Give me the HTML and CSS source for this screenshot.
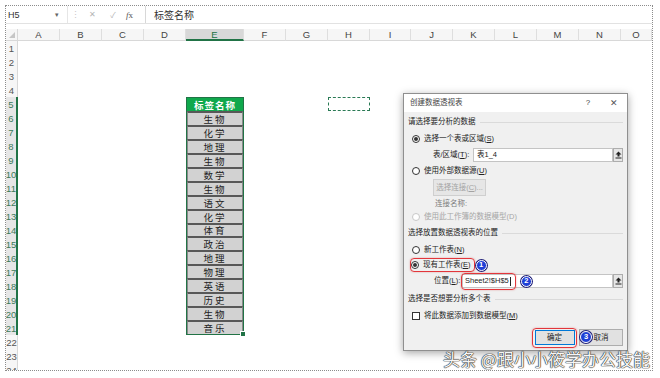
FILE: index.html
```html
<!DOCTYPE html>
<html>
<head>
  <meta charset="utf-8">
  <title>创建数据透视表</title>
  <link rel="stylesheet" href="styles.css">
</head>
<body>
  <div class="frame">
    <div class="fbar">
      <div class="namebox"><span>H5</span><span class="dd">▾</span></div>
      <div class="grip">⋮</div>
      <div class="fx-icons">
        <span class="ic">✕</span>
        <span class="ic">✓</span>
        <span class="fx"><i>f</i>x</span>
      </div>
      <div class="finput">标签名称</div>
    </div>

    <div class="sheet">
      <div class="corner"></div>
      <div class="ch">A</div>
      <div class="ch">B</div>
      <div class="ch">C</div>
      <div class="ch">D</div>
      <div class="ch sel">E</div>
      <div class="ch">F</div>
      <div class="ch">G</div>
      <div class="ch">H</div>
      <div class="ch">I</div>
      <div class="ch">J</div>
      <div class="ch">K</div>
      <div class="ch">L</div>
      <div class="ch">M</div>
      <div class="ch">N</div>
      <div class="ch">O</div>

      <div class="rowheads">
        <div class="rh">1</div>
        <div class="rh">2</div>
        <div class="rh">3</div>
        <div class="rh">4</div>
        <div class="rh sel">5</div>
        <div class="rh sel">6</div>
        <div class="rh sel">7</div>
        <div class="rh sel">8</div>
        <div class="rh sel">9</div>
        <div class="rh sel">10</div>
        <div class="rh sel">11</div>
        <div class="rh sel">12</div>
        <div class="rh sel">13</div>
        <div class="rh sel">14</div>
        <div class="rh sel">15</div>
        <div class="rh sel">16</div>
        <div class="rh sel">17</div>
        <div class="rh sel">18</div>
        <div class="rh sel">19</div>
        <div class="rh sel">20</div>
        <div class="rh sel">21</div>
        <div class="rh">22</div>
        <div class="rh">23</div>
        <div class="rh">24</div>
      </div>

      <div class="marquee"></div>

      <div class="tbl">
        <div class="th">标签名称</div>
        <div class="td">生物</div>
        <div class="td">化学</div>
        <div class="td">地理</div>
        <div class="td">生物</div>
        <div class="td">数学</div>
        <div class="td">生物</div>
        <div class="td">语文</div>
        <div class="td">化学</div>
        <div class="td">体育</div>
        <div class="td">政治</div>
        <div class="td">地理</div>
        <div class="td">物理</div>
        <div class="td">英语</div>
        <div class="td">历史</div>
        <div class="td">生物</div>
        <div class="td">音乐</div>
      </div>
    </div>

    <div class="dialog">
      <div class="dlg-title">
        <span>创建数据透视表</span>
        <span class="q">?</span>
        <span class="x">✕</span>
      </div>
      <div class="dlg-body">
        <div class="sec h20">请选择要分析的数据</div>
        <div class="opt h13"><span class="radio on"></span><span>选择一个表或区域(<u>S</u>)</span></div>
        <div class="field h19">
          <span class="flabel w40">表/区域(<u>T</u>):</span>
          <div class="inp">表1_4</div>
          <span class="pick"><svg width="7" height="8" viewBox="0 0 7 8"><path d="M3.5 0.5 L6.5 3.5 H4.5 V5.5 H2.5 V3.5 H0.5 Z" fill="#222"/><rect x="0.5" y="6.5" width="6" height="1" fill="#222"/></svg></span>
        </div>
        <div class="opt h14"><span class="radio"></span><span>使用外部数据源(<u>U</u>)</span></div>
        <div class="connrow h19"><span class="btn dis"><span>选择连接(<u>C</u>)...</span></span></div>
        <div class="connname h13">连接名称:</div>
        <div class="opt dis h14"><span class="radio"></span><span>使用此工作簿的数据模型(D)</span></div>

        <div class="sec h18">选择放置数据透视表的位置</div>
        <div class="opt h16"><span class="radio"></span><span>新工作表(<u>N</u>)</span></div>
        <div class="opt marked h14">
          <span class="mark"><span class="radio on"></span><span>现有工作表(<u>E</u>)</span></span>
          <span class="badge b1">1</span>
        </div>
        <div class="field h18">
          <span class="flabel w28">位置(<u>L</u>):</span>
          <div class="inp">
            <span class="mark m2"><span>Sheet2!$H$5</span><span class="caret"></span></span>
            <span class="badge b2">2</span>
          </div>
          <span class="pick"><svg width="7" height="8" viewBox="0 0 7 8"><path d="M3.5 0.5 L6.5 3.5 H4.5 V5.5 H2.5 V3.5 H0.5 Z" fill="#222"/><rect x="0.5" y="6.5" width="6" height="1" fill="#222"/></svg></span>
        </div>

        <div class="sec h18">选择是否想要分析多个表</div>
        <div class="opt h16"><span class="check"></span><span>将此数据添加到数据模型(<u>M</u>)</span></div>

        <div class="actions">
          <span class="mark okwrap"><span class="btn ok">确定</span></span>
          <span class="btn cancel">取消</span>
          <span class="badge b3">3</span>
        </div>
      </div>
    </div>

    <div class="wm">头条 @跟小小筱学办公技能</div>
  </div>
</body>
</html>
```

FILE: styles.css
```css
body {
  margin: 0;
  background: #fff;
  font-family: "Liberation Sans", "Noto Sans CJK SC", sans-serif;
}

.frame {
  position: relative;
  margin: 5px 0 0 5px;
  width: 646px;
  height: 364px;
  border: 1px dotted #8c8c8c;
  overflow: hidden;
  background: #fff;
}

/* formula bar */
.fbar {
  display: flex;
  height: 18px;
  box-sizing: border-box;
  border-bottom: 1px solid #e2e2e2;
  font-size: 9px;
  color: #333;
}

.namebox {
  width: 62px;
  box-sizing: border-box;
  padding: 0 8px 0 2px;
  display: flex;
  align-items: center;
  justify-content: space-between;
  border-right: 1px solid #e6e6e6;
}

.dd {
  font-size: 7px;
  color: #666;
}

.grip {
  width: 14px;
  display: flex;
  align-items: center;
  justify-content: center;
  color: #c8c8c8;
}

.fx-icons {
  width: 63px;
  box-sizing: border-box;
  padding-left: 6px;
  display: flex;
  align-items: center;
  gap: 13px;
  color: #b4b4b4;
}

.ic {
  width: 8px;
  text-align: center;
  font-size: 8px;
}

.fx {
  margin-left: -4px;
  font-family: "Liberation Serif", serif;
  font-size: 9px;
  color: #555;
}

.finput {
  flex: 1;
  border-left: 1px solid #d8d8d8;
  padding-left: 8px;
  display: flex;
  align-items: center;
  font-family: "Noto Sans CJK SC", sans-serif;
  font-size: 10px;
  color: #333;
}

/* sheet grid */
.sheet {
  margin-top: 5px;
  display: grid;
  grid-template-columns: 12px 42px 42px 42px 42px 58px 42px 42px 42px 41px 42px 42px 42px 42px 42px 31px;
  grid-template-rows: 12px repeat(24, 14px);
}

.corner {
  background: #f6f6f6;
  border-right: 1px solid #d8d8d8;
  border-bottom: 1px solid #d8d8d8;
  display: flex;
  justify-content: flex-end;
  align-items: flex-end;
  padding: 0 2px 2px 0;
}

.corner::after {
  content: "";
  width: 0;
  height: 0;
  border-left: 6px solid transparent;
  border-bottom: 6px solid #c6c6c6;
}

.ch {
  background: #f6f6f6;
  border-bottom: 1px solid #d8d8d8;
  border-right: 1px solid #dedede;
  display: flex;
  align-items: center;
  justify-content: center;
  font-size: 9.5px;
  color: #444;
}

.ch.sel {
  background: #d8d8d8;
  color: #217346;
  border-bottom: 2px solid #217346;
}

.rowheads {
  grid-column: 1;
  grid-row: 2 / span 24;
  display: flex;
  flex-direction: column;
}

.rh {
  flex: none;
  height: 14px;
  box-sizing: border-box;
  background: #f6f6f6;
  border-right: 1px solid #d8d8d8;
  display: flex;
  align-items: center;
  justify-content: center;
  font-size: 9.5px;
  color: #555;
}

.rh.sel {
  background: #e6e6e6;
  color: #3d7a5a;
  border-right: 2px solid #217346;
}

.marquee {
  grid-column: 9;
  grid-row: 6;
  border: 1px dashed #2a7a55;
}

.tbl {
  grid-column: 6;
  grid-row: 6 / span 17;
  min-height: 0;
  position: relative;
  border: 1px solid #217346;
  display: flex;
  flex-direction: column;
  font-family: "Noto Sans CJK SC", sans-serif;
  font-size: 9.5px;
  line-height: 10px;
}

.tbl::after {
  content: "";
  position: absolute;
  right: -3px;
  bottom: -3px;
  width: 4px;
  height: 4px;
  background: #217346;
  border: 1px solid #fff;
}

.th {
  flex: none;
  height: 13px;
  background: #0fa84c;
  color: #fff;
  font-weight: bold;
  letter-spacing: 1px;
  display: flex;
  align-items: center;
  justify-content: center;
}

.td {
  flex: 1 1 0;
  min-height: 0;
  overflow: hidden;
  background: #d2d2d2;
  border-top: 2px solid #585858;
  border-left: 1px solid #8a8a8a;
  border-right: 1px solid #8a8a8a;
  color: #222;
  letter-spacing: 2px;
  display: flex;
  align-items: center;
  justify-content: center;
}

/* dialog */
.dialog {
  position: absolute;
  left: 397px;
  top: 87px;
  width: 225px;
  height: 258px;
  box-sizing: border-box;
  border: 1px solid #8f8f8f;
  background: #f0f0f0;
  box-shadow: 0 2px 8px rgba(0, 0, 0, 0.35);
  font-family: "Liberation Sans", "Noto Sans CJK SC", sans-serif;
  font-size: 7.5px;
  color: #222;
  line-height: 1;
}

.dlg-title {
  height: 18px;
  background: #fff;
  display: flex;
  align-items: center;
  padding: 0 8px 0 6px;
  color: #444;
}

.q {
  margin-left: auto;
  width: 10px;
  text-align: center;
  font-size: 8px;
}

.x {
  width: 10px;
  margin-left: 16px;
  text-align: center;
  font-size: 9px;
  color: #555;
}

.dlg-body {
  padding: 0 4px;
}

.h13 { height: 13px; }
.h14 { height: 14px; }
.h16 { height: 16px; }
.h18 { height: 18px; }
.h19 { height: 19px; }
.h20 { height: 20px; }

.sec {
  display: flex;
  align-items: center;
  gap: 4px;
}

.sec::after {
  content: "";
  flex: 1;
  border-top: 1px solid #dadada;
}

.opt {
  display: flex;
  align-items: center;
  gap: 4px;
  padding-left: 4px;
}

.opt.dis {
  color: #a6a6a6;
}

.opt.marked {
  padding-left: 2px;
  gap: 1px;
}

.radio {
  width: 8px;
  height: 8px;
  box-sizing: border-box;
  border: 1px solid #333;
  border-radius: 50%;
  background: #fff;
  display: inline-flex;
  align-items: center;
  justify-content: center;
}

.radio.on::after {
  content: "";
  width: 4px;
  height: 4px;
  border-radius: 50%;
  background: #333;
}

.opt.dis .radio {
  border-color: #c8c8c8;
}

.check {
  width: 8px;
  height: 8px;
  box-sizing: border-box;
  border: 1px solid #333;
  background: #fff;
}

.field {
  display: flex;
  align-items: center;
  padding-left: 25px;
}

.flabel.w40 { width: 40px; }
.flabel.w28 { width: 28px; padding-left: 1px; }

.inp {
  flex: 1;
  height: 14px;
  box-sizing: border-box;
  background: #fff;
  border: 1px solid #c4c4c4;
  padding-left: 3px;
  display: flex;
  align-items: center;
}

.pick {
  width: 10px;
  height: 14px;
  box-sizing: border-box;
  border: 1px solid #adadad;
  background: #e6e6e6;
  display: flex;
  align-items: center;
  justify-content: center;
}

.connrow {
  display: flex;
  align-items: center;
  padding-left: 25px;
}

.btn {
  display: inline-flex;
  align-items: center;
  justify-content: center;
  box-sizing: border-box;
  background: #e1e1e1;
  border: 1px solid #adadad;
}

.btn.dis {
  width: 53px;
  height: 17px;
  background: #e6e6e6;
  border-color: #cfcfcf;
  color: #a3a3a3;
}

.connname {
  display: flex;
  align-items: center;
  padding-left: 27px;
  color: #7c7c7c;
}

.mark {
  display: inline-flex;
  align-items: center;
  gap: 4px;
  box-sizing: border-box;
  border: 1.5px solid #e2363b;
  border-radius: 4px;
  box-shadow: 0 0 2px rgba(200, 0, 0, 0.35);
}

.opt.marked .mark {
  height: 14px;
  padding-right: 3px;
}

.mark.m2 {
  height: 17px;
  margin-left: -5px;
  padding: 0 4px 0 3px;
  gap: 0;
}

.caret {
  width: 1px;
  height: 9px;
  background: #222;
  margin-left: 1px;
}

.badge {
  width: 11px;
  height: 11px;
  border-radius: 50%;
  background: #1f3fd6;
  border: 1px solid #fff;
  box-shadow: 0 0 0 1px #23237a;
  color: #fff;
  font-size: 7.5px;
  font-weight: bold;
  display: inline-flex;
  align-items: center;
  justify-content: center;
  box-sizing: border-box;
}

.badge.b2 {
  margin-left: 5px;
}

.actions {
  position: relative;
  margin-top: 3px;
  height: 21px;
  display: flex;
  align-items: center;
  justify-content: flex-end;
  gap: 2px;
}

.okwrap {
  padding: 1.5px;
}

.btn.ok {
  width: 40px;
  height: 15px;
  border-color: #0078d7;
}

.btn.cancel {
  width: 44px;
  height: 17px;
}

.badge.b3 {
  position: absolute;
  left: 172px;
  top: 4px;
  width: 12px;
  height: 12px;
}

/* watermark */
.wm {
  position: absolute;
  left: 437px;
  top: 343px;
  white-space: nowrap;
  font-family: "Noto Sans CJK SC", sans-serif;
  font-size: 17px;
  line-height: 20px;
  color: #f6f6f6;
  text-shadow: 0 0 1px #222, 0 0 1px #222, 0 0 1px #222;
}
```
